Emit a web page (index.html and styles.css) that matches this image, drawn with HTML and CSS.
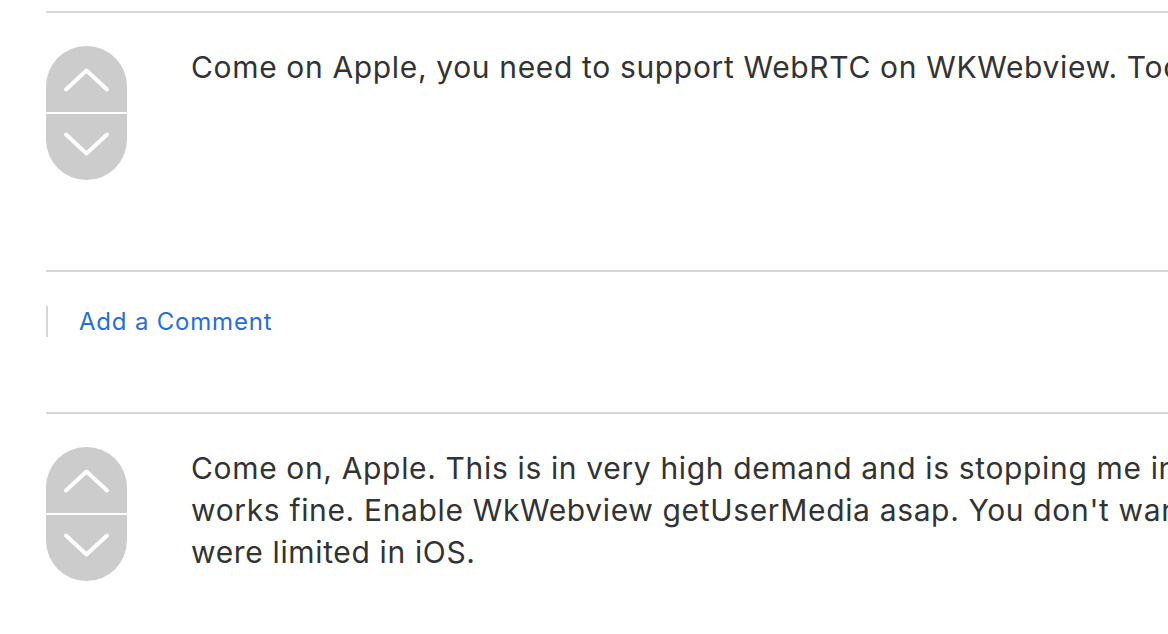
FILE: index.html
```html
<!DOCTYPE html>
<html lang="en">
<head>
<meta charset="utf-8">
<title>Thread</title>
<link rel="stylesheet" href="styles.css">
</head>
<body>
<div class="thread">
  <div class="post">
    <div class="vote">
      <button class="vote-btn up" aria-label="Vote up">
        <svg viewBox="0 0 81 66" width="81" height="66"><polyline points="20,43.5 40.5,24.5 61,43.5"/></svg>
      </button>
      <button class="vote-btn down" aria-label="Vote down">
        <svg viewBox="0 0 81 66" width="81" height="66"><polyline points="20,20.5 40.5,39.5 61,20.5"/></svg>
      </button>
    </div>
    <div class="post-body">
      <p>Come on Apple, you need to support WebRTC on WKWebview. Too many apps rely on it.</p>
    </div>
  </div>
  <div class="comment-row">
    <a class="add-comment" href="#">Add a Comment</a>
  </div>
  <div class="post">
    <div class="vote">
      <button class="vote-btn up" aria-label="Vote up">
        <svg viewBox="0 0 81 66" width="81" height="66"><polyline points="20,43.5 40.5,24.5 61,43.5"/></svg>
      </button>
      <button class="vote-btn down" aria-label="Vote down">
        <svg viewBox="0 0 81 66" width="81" height="66"><polyline points="20,20.5 40.5,39.5 61,20.5"/></svg>
      </button>
    </div>
    <div class="post-body">
      <p>Come on, Apple. This is in very high demand and is stopping me in my tracks. Safari<br>works fine. Enable WkWebview getUserMedia asap. You don't want developers to think they<br>were limited in iOS.</p>
    </div>
  </div>
</div>
</body>
</html>
```

FILE: styles.css
```css
html, body {
  margin: 0;
  padding: 0;
  background: #fff;
  overflow: hidden;
}

body {
  font-family: "Inter", "Liberation Sans", sans-serif;
  color: #333;
}

.thread {
  margin: 11px 0 0 46px;
  width: 1800px;
  border-top: 2px solid #d6d6d6;
}

.post {
  display: flex;
  align-items: flex-start;
  padding-top: 33px;
  height: 224px;
  border-bottom: 2px solid #d6d6d6;
}

.vote {
  flex: none;
  width: 81px;
  display: flex;
  flex-direction: column;
  gap: 2px;
}

.vote-btn {
  display: block;
  width: 81px;
  height: 66px;
  padding: 0;
  border: 0;
  background: #cccccc;
  cursor: pointer;
}

.vote-btn.up {
  border-radius: 40.5px 40.5px 0 0;
}

.vote-btn.down {
  border-radius: 0 0 40.5px 40.5px;
}

.vote-btn svg {
  display: block;
}

.vote-btn polyline {
  fill: none;
  stroke: #fff;
  stroke-width: 4;
  stroke-linecap: round;
  stroke-linejoin: round;
}

.post-body {
  margin-left: 64px;
  white-space: nowrap;
}

.post-body p {
  margin: 0;
  font-size: 30px;
  line-height: 42px;
  letter-spacing: 0.65px;
}

.comment-row {
  height: 106px;
  padding-top: 34px;
  border-bottom: 2px solid #d6d6d6;
}

.add-comment {
  display: inline-block;
  border-left: 2px solid #d6d6d6;
  padding-left: 31px;
  font-size: 24px;
  line-height: 31px;
  letter-spacing: 0.8px;
  color: #2a6fcd;
  text-decoration: none;
}
```
